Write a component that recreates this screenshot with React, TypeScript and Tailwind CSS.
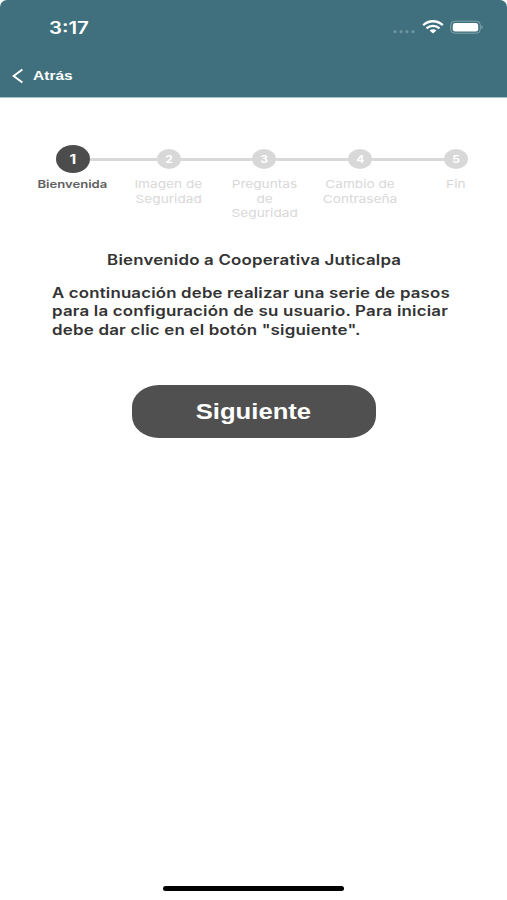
import { Fragment } from 'react';
import clsx from 'clsx';

interface Step {
  number: number;
  lines: string[];
}

const steps: Step[] = [
  { number: 1, lines: ['Bienvenida'] },
  { number: 2, lines: ['Imagen de', 'Seguridad'] },
  { number: 3, lines: ['Preguntas', 'de', 'Seguridad'] },
  { number: 4, lines: ['Cambio de', 'Contraseña'] },
  { number: 5, lines: ['Fin'] },
];

function StatusIcons() {
  return (
    <svg width="90" height="16" viewBox="0 0 90 16" fill="none">
      {/* Signal */}
      <g fill="#6b949e">
        <circle cx="2" cy="11.7" r="1.6" />
        <circle cx="8" cy="11.7" r="1.6" />
        <circle cx="14" cy="11.7" r="1.6" />
        <circle cx="20" cy="11.7" r="1.6" />
      </g>
      {/* Wifi */}
      <g stroke="white" strokeWidth="2.3">
        <path d="M30.2 5.2C35.6 -0.1 44.2 -0.1 49.8 5.2" />
        <path d="M33.5 8.4C37.2 5 42.8 5 46.5 8.4" />
      </g>
      <path d="M36.6 10.6C38.5 8.9 41.5 8.9 43.4 10.6L40 13.4Z" fill="white" />
      {/* Battery */}
      <rect x="57.7" y="1.2" width="29.6" height="12" rx="3.8" stroke="#7fa3ac" />
      <rect x="59.8" y="3.1" width="25.4" height="8.4" rx="2.3" fill="white" />
      <path d="M88.4 5.4C90.4 6 90.4 8.4 88.4 9Z" fill="#7fa3ac" />
    </svg>
  );
}

function Header() {
  return (
    <header className="h-[98px] shrink-0 rounded-t-[7px] border-b border-[#a5bfc7] bg-[#40707d] text-white">
      <div className="flex h-[55px] items-center justify-between pl-[49px] pr-6">
        <span className="origin-left scale-x-[1.2] pt-px text-[17px] font-semibold leading-none">3:17</span>
        <StatusIcons />
      </div>
      <div className="flex h-[42px] items-center pl-3">
        <svg width="12" height="16" viewBox="0 0 12 16" fill="none" stroke="white" strokeWidth="2">
          <path d="M10.4 1.5L1.6 8L10.4 14.5" />
        </svg>
        <span className="ml-[9px] origin-left scale-x-[1.15] font-['Liberation_Sans',sans-serif] text-[13.5px] font-bold leading-none">
          Atrás
        </span>
      </div>
    </header>
  );
}

function Stepper({ current }: { current: number }) {
  return (
    <div className="mt-[47px]">
      <div className="flex h-7 items-center pl-14">
        {steps.map((step, i) => (
          <Fragment key={step.number}>
            {i > 0 && (
              <div
                className={clsx('h-[3px] shrink-0 bg-[#d8d8d8]', i === 1 ? 'w-[66.7px]' : 'w-[71.7px]')}
              />
            )}
            <div
              className={clsx(
                'flex shrink-0 items-center justify-center rounded-[50%] text-white',
                step.number === current ? 'h-7 w-[34px] bg-[#4c4c4c]' : 'h-5 w-6 bg-[#d8d8d8]'
              )}
            >
              <span
                className={clsx(
                  'scale-x-[1.2] font-bold leading-none',
                  step.number === current ? 'text-[13px]' : 'text-[10px]'
                )}
              >
                {step.number}
              </span>
            </div>
          </Fragment>
        ))}
      </div>
      <div className="mt-1 flex pl-[25px]">
        {steps.map((step) => (
          <div
            key={step.number}
            className={clsx(
              'flex w-[95.7px] shrink-0 flex-col items-center whitespace-nowrap text-[11px] leading-[14.5px]',
              step.number === current ? 'font-semibold text-[#606060]' : 'text-[#d8d8d8]'
            )}
          >
            {step.lines.map((line) => (
              <span key={line} className={step.number === current ? 'scale-x-[1.19]' : 'scale-x-[1.24]'}>
                {line}
              </span>
            ))}
          </div>
        ))}
      </div>
    </div>
  );
}

export default function App() {
  return (
    <div className="flex h-[900px] w-[507px] flex-col overflow-hidden bg-white font-['Inter','Liberation_Sans',sans-serif]">
      <Header />

      <Stepper current={1} />

      <main className="mt-[30px] flex flex-col text-sm font-semibold tracking-[0.16px] text-[#333333]">
        <h1 className="self-center scale-x-[1.205] whitespace-nowrap pl-px leading-[18.5px]">
          Bienvenido a Cooperativa Juticalpa
        </h1>
        <div className="ml-[52px] mt-[14.5px] flex flex-col items-start whitespace-nowrap leading-[18.5px]">
          <span className="origin-left scale-x-[1.2]">A continuación debe realizar una serie de pasos</span>
          <span className="origin-left scale-x-[1.205]">para la configuración de su usuario. Para iniciar</span>
          <span className="origin-left scale-x-[1.21]">debe dar clic en el botón "siguiente".</span>
        </div>
        <button className="ml-[132px] mt-[46px] flex h-[53px] w-[244px] items-center justify-center rounded-[27px/22px] bg-[#505050] tracking-normal text-white">
          <span className="scale-x-[1.165] pr-px font-['Liberation_Sans',sans-serif] text-[22px] font-bold leading-none">
            Siguiente
          </span>
        </button>
      </main>

      {/* Home indicator */}
      <div className="mb-[9px] mt-auto h-[5px] w-[181px] self-center rounded-full bg-black" />
    </div>
  );
}
